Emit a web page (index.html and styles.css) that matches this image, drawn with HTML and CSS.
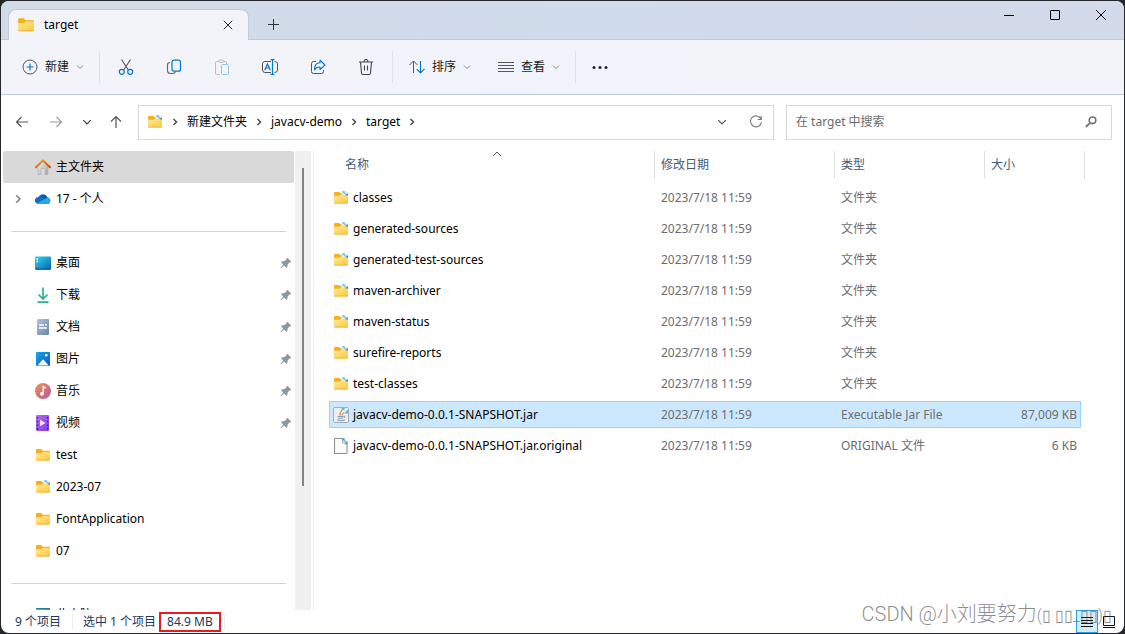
FILE: index.html
```html
<!DOCTYPE html>
<html lang="zh-CN">
<head>
<meta charset="utf-8">
<title>target</title>
<link rel="stylesheet" href="styles.css">
</head>
<body>
<svg class="defs" aria-hidden="true">
  <defs>
    <linearGradient id="gFolder" x1="0" y1="0" x2="1" y2="1"><stop offset="0" stop-color="#ffe79a"/><stop offset="1" stop-color="#fdc93c"/></linearGradient>
    <linearGradient id="gDesk" x1="0" y1="0" x2="1" y2="1"><stop offset="0" stop-color="#35d5e6"/><stop offset="1" stop-color="#0a62b8"/></linearGradient>
    <linearGradient id="gDoc" x1="0" y1="0" x2="1" y2="1"><stop offset="0" stop-color="#b3c3d9"/><stop offset="1" stop-color="#6786a8"/></linearGradient>
    <linearGradient id="gPic" x1="0" y1="0" x2="1" y2="1"><stop offset="0" stop-color="#19a5ec"/><stop offset="1" stop-color="#0a5cb8"/></linearGradient>
    <linearGradient id="gMus" x1="0" y1="0" x2="1" y2="1"><stop offset="0" stop-color="#f39354"/><stop offset="1" stop-color="#b0559f"/></linearGradient>
    <linearGradient id="gVid" x1="0" y1="0" x2="1" y2="1"><stop offset="0" stop-color="#b56cf5"/><stop offset="1" stop-color="#7f3be0"/></linearGradient>
    <linearGradient id="gRoof" x1="0" y1="0" x2="1" y2="1"><stop offset="0" stop-color="#f7a02b"/><stop offset="1" stop-color="#d1440c"/></linearGradient>
    <linearGradient id="gWall" x1="0" y1="0" x2="1" y2="1"><stop offset="0" stop-color="#f2f2f2"/><stop offset="1" stop-color="#a5a5a5"/></linearGradient>
  </defs>
  <symbol id="folder" viewBox="0 0 16 16"><path d="M1 3.200Q1 2 2 2h4.200l1.600 1.800H14q1 0 1 1V7H1z" fill="#f5b01a"/><path d="M1 6.200h5.600L8 4.800h6q1 0 1 1v6.800q0 1-1 1H2q-1 0-1-1z" fill="url(#gFolder)"/><path d="M1.300 13.100h13.400" stroke="#eab02f" stroke-width=".8"/></symbol>
  <symbol id="linked" viewBox="0 0 16 16"><path d="M1 3.200Q1 2 2 2h4.200l1.600 1.200H14q1 0 1 1V7H1z" fill="#f5b01a"/><path d="M8.500 1.200h5.500l1 1V6H8.500z" fill="#e3f1f8"/><path d="M9 1.200h3.200L9.800 3.600z" fill="#6fbfe6"/><path d="M11 2.500l3 2.800" stroke="#6fbfe6" stroke-width="1.200"/><path d="M15 3v3.200h-3.200z" fill="#3b86ad"/><path d="M1 5.800h5.600L8 4.800h3.500l1 .8H15v7q0 1-1 1H2q-1 0-1-1z" fill="url(#gFolder)"/><path d="M1.300 13.100h13.400" stroke="#eab02f" stroke-width=".8"/></symbol>
  <symbol id="home" viewBox="0 0 16 16"><path d="M3 7l5-4.500L13 7v8.500H10V10H6v5.500H3z" fill="url(#gWall)"/><path d="M3 7l5-4.500L13 7v8.500h-3V9.500H6v6H3z" fill="none" stroke="#a9a9a9" stroke-width=".5"/><path d="M1 8.200l7-6.800 7 6.800" fill="none" stroke="url(#gRoof)" stroke-width="2" stroke-linejoin="round" stroke-linecap="round"/></symbol>
  <symbol id="cloud" viewBox="0 0 16 16"><path d="M3.500 13A3.500 3.500 0 0 1 3.300 6 5 5 0 0 1 12.500 6.500 3.300 3.300 0 0 1 12.800 13z" fill="#0d6fcb"/><path d="M5.500 5A5 5 0 0 1 12.500 6.500L9 9z" fill="#1257a8"/><path d="M2 12.500L9 8.200l3-1.500a3.200 3.200 0 0 1 .8 6.300h-9z" fill="#28a8ea"/></symbol>
  <symbol id="desktop" viewBox="0 0 16 16"><rect y="1.500" width="16" height="13" rx="1" fill="url(#gDesk)"/><path d="M1.500 4h1.500M1.500 6.500h1.500" stroke="#eaffff" stroke-width="1.500"/><path d="M0 13.500h16v.5q0 .8-1 .8H1q-1 0-1-.8z" fill="#0b519c"/></symbol>
  <symbol id="download" viewBox="0 0 16 16"><path d="M8 .5v11M3.500 7.500L8 12l4.500-4.500M2.500 15.200h11" fill="none" stroke="#27b392" stroke-width="1.700"/></symbol>
  <symbol id="document" viewBox="0 0 16 16"><rect x="2" width="12" height="16" rx="1" fill="url(#gDoc)"/><path d="M4 6h5M4 9h8M10 5.800h2" stroke="#fff" stroke-width="1.500"/></symbol>
  <symbol id="picture" viewBox="0 0 16 16"><rect x="1" y="1" width="14" height="14" rx="1" fill="url(#gPic)"/><path d="M2.500 14.500l5-5.700q.6-.6 1.200 0l5 5.700z" fill="#f2faff"/><circle cx="11.300" cy="4.300" r="1.300" fill="#fff"/></symbol>
  <symbol id="music" viewBox="0 0 16 16"><circle cx="8" cy="8" r="8" fill="url(#gMus)"/><circle cx="6.900" cy="10.800" r="1.900" fill="#fff"/><path d="M8.200 10.800V3.500l2.600 1.600" fill="none" stroke="#fff" stroke-width="1.400"/></symbol>
  <symbol id="video" viewBox="0 0 16 16"><rect x="1" width="13" height="16" rx="1" fill="url(#gVid)"/><path d="M5 4.800v6.400L10.500 8z" fill="#f5e9ff"/><path d="M2.500 2v13M12.700 2v13" stroke="#4b1b96" stroke-width="1.500" stroke-dasharray="1.500 2.200"/></symbol>
  <symbol id="pc" viewBox="0 0 16 16"><rect x="1" y="1" width="14" height="10" fill="url(#gDesk)"/><path d="M1 1h14v1H1z" fill="#277d91"/><path d="M5 13h6v1H5z" fill="#888"/></symbol>
  <symbol id="pin" viewBox="0 0 12 12"><path d="M7.300.8l3.900 3.700-1 1-.7-.1-2 2.200v2.200L6.500 10.700 4.200 8.400.8 11.500l-.4-.4L3.300 7.500 1.100 5.200l1-.9h2.200l2.300-2-.2-.7z" fill="#8b989f"/></symbol>
  <symbol id="jar" viewBox="0 0 16 16"><rect x=".5" y=".5" width="15" height="15" rx="1" fill="#eceef0" stroke="#a3abb3"/><path d="M7.500 8.500C5 6.200 9.500 5.300 8.500 2.500M9.300 8.500c-1-1.500 1.500-2 1.500-3" fill="none" stroke="#e88a5b" stroke-width="1.200"/><path d="M4.500 9.500h6M5 11.300h5M4 13q4 1.300 8 0M10.500 9q2.500 0 .5 2" fill="none" stroke="#8199b0"/><path d="M9 1h3l-2.400 2.400zM15 3v3.200h-3.200zM11 2.500l3 3" fill="#4ba5d3" stroke="#6fbfe6" stroke-width=".6"/></symbol>
  <symbol id="file" viewBox="0 0 16 16"><path d="M1.500.5h8.500l4 4v11H1.500z" fill="#fbfbfb" stroke="#8c8c8c"/><path d="M9.500.5v4.500h4.500" fill="#e6eef3" stroke="#a9b4ba"/><path d="M9 .6h3.200L9.800 3zM14.500 3v3.200h-3.200z" fill="#3f93bd"/><path d="M10.500 1.800l3 3" stroke="#6fbfe6" stroke-width="1.200"/></symbol>
  <symbol id="down" viewBox="0 0 8 8"><path d="M1 2.500l3 3 3-3" fill="none" stroke="currentColor"/></symbol>
  <symbol id="right" viewBox="0 0 8 8"><path d="M2.500 1l3 3-3 3" fill="none" stroke="currentColor" stroke-width="1.400"/></symbol>
</svg>

<div class="window">
  <header class="titlebar">
    <div class="tab">
      <svg class="i18" viewBox="0 0 16 16"><use href="#folder"/></svg>
      <span class="tab-name">target</span>
      <button class="plain" aria-label="关闭标签页"><svg class="i10" viewBox="0 0 10 10"><path d="M.8.8l8.400 8.400M9.200.8L.8 9.200" fill="none" stroke="#222"/></svg></button>
    </div>
    <button class="plain newtab" aria-label="新标签页"><svg class="i12" viewBox="0 0 12 12"><path d="M5.500 0v11M0 5.500h11" stroke="#333"/></svg></button>
    <div class="controls">
      <button class="plain" aria-label="最小化"><svg class="i12" viewBox="0 0 12 12"><path d="M1 6.500h10" stroke="#000"/></svg></button>
      <button class="plain" aria-label="最大化"><svg class="i12" viewBox="0 0 12 12"><rect x="1.500" y="1.500" width="9" height="9" rx=".5" fill="none" stroke="#000"/></svg></button>
      <button class="plain" aria-label="关闭"><svg class="i12" viewBox="0 0 12 12"><path d="M1 1l10 10M11 1L1 11" stroke="#000"/></svg></button>
    </div>
  </header>

  <div class="toolbar">
    <button class="plain tool first"><svg class="i16" viewBox="0 0 16 16"><circle cx="8" cy="8" r="7" fill="none" stroke="#555"/><path d="M8 4.500v7M4.500 8h7" stroke="#0078d4" stroke-width="1.200"/></svg><span>新建</span><svg class="i8"><use href="#down"/></svg></button>
    <div class="group icons">
      <button class="plain ico" aria-label="剪切"><svg class="i16" viewBox="0 0 16 16"><path d="M3.500.5l6.800 10.500M12.500.5L5.700 11" stroke="#555" stroke-width="1.100"/><circle cx="3.800" cy="12.800" r="2.500" fill="none" stroke="#0078d4" stroke-width="1.200"/><circle cx="12.200" cy="12.800" r="2.500" fill="none" stroke="#0078d4" stroke-width="1.200"/></svg></button>
      <button class="plain ico" aria-label="复制"><svg class="i16" viewBox="0 0 16 16"><path d="M4 3.500Q1.500 3.500 1.500 6v5.500q0 3 3 3H7q2 0 2.500-2" fill="none" stroke="#666" stroke-width="1.100"/><rect x="6" y="1.200" width="8.500" height="11" rx="2" fill="none" stroke="#0078d4" stroke-width="1.200"/></svg></button>
      <button class="plain ico" aria-label="粘贴"><svg class="i16" viewBox="0 0 16 16"><path d="M6 15.500H2.500q-1 0-1-1v-11q0-1 1-1H4M10 2.500h1.500q1 0 1 1V5M5.500 1h3q1 0 1 1.200t-1 1.200h-3q-1 0-1-1.200t1-1.200z" fill="none" stroke="#b9bcc1"/><rect x="7.500" y="5.500" width="7" height="10" rx="1" fill="none" stroke="#91c5ec"/></svg></button>
      <button class="plain ico" aria-label="重命名"><svg class="i16" viewBox="0 0 16 16"><path d="M9 13.500H3q-2.500 0-2.500-2.500V5Q.5 2.500 3 2.500h6M12.500 2.500q3 0 3 2.500v6q0 2.500-3 2.500" fill="none" stroke="#555"/><path d="M2.700 11.200L5.500 5l2.800 6.200M3.700 9h3.600M8.500.6h4M8.500 15.400h4M10.500.6v14.800" fill="none" stroke="#0078d4" stroke-width="1.200"/></svg></button>
      <button class="plain ico" aria-label="共享"><svg class="i16" viewBox="0 0 16 16"><path d="M6 2.500H3.500q-2 0-2 2v8q0 2 2 2h8q2 0 2-2V11" fill="none" stroke="#555"/><path d="M10 1.200L15 6l-5 4.500V8Q6.500 7.500 4.500 11 4.500 4 10 3.800z" fill="#f7fbff" stroke="#0078d4" stroke-width="1.100" stroke-linejoin="round"/></svg></button>
      <button class="plain ico" aria-label="删除"><svg class="i16" viewBox="0 0 16 16"><path d="M1 3h14M2.500 3l1 11q.2 1.500 1.500 1.500h6q1.300 0 1.500-1.500l1-11M6 3q0-2.500 2-2.500T10 3M6.500 6.500v5M9.500 6.500v5" fill="none" stroke="#444" stroke-width="1.100"/></svg></button>
    </div>
    <div class="group menus">
      <button class="plain tool"><svg class="i16" viewBox="0 0 16 16"><path d="M4.500 14V2M.5 6l4-4 4 4" fill="none" stroke="#555"/><path d="M11.500 2v12M7.800 10.200l3.700 3.700 4-4" fill="none" stroke="#0078d4" stroke-width="1.100"/></svg><span>排序</span><svg class="i8"><use href="#down"/></svg></button>
      <button class="plain tool"><svg class="i16" viewBox="0 0 16 16"><path d="M0 3.500h16M0 6.500h16M0 9.500h16M0 12.500h16" stroke="#555"/></svg><span>查看</span><svg class="i8"><use href="#down"/></svg></button>
    </div>
    <div class="group more"><button class="plain" aria-label="更多"><svg class="i16" viewBox="0 0 16 16"><g fill="#222"><circle cx="2" cy="8.500" r="1.500"/><circle cx="8" cy="8.500" r="1.500"/><circle cx="14" cy="8.500" r="1.500"/></g></svg></button></div>
  </div>

  <div class="navrow">
    <button class="plain nav" aria-label="后退"><svg class="i14" viewBox="0 0 14 14"><path d="M13 7H1.500M6.500 2L1.500 7l5 5" fill="none" stroke="#555" stroke-width="1.200"/></svg></button>
    <button class="plain nav" aria-label="前进"><svg class="i14" viewBox="0 0 14 14"><path d="M1 7h11.500M7.500 2l5 5-5 5" fill="none" stroke="#999" stroke-width="1.100"/></svg></button>
    <button class="plain nav recent" aria-label="最近位置"><svg class="i10"><use href="#down"/></svg></button>
    <button class="plain nav up" aria-label="向上"><svg class="i14" viewBox="0 0 14 14"><path d="M7 13V1.500M2 6.500l5-5 5 5" fill="none" stroke="#555" stroke-width="1.200"/></svg></button>
    <nav class="address" aria-label="地址">
      <svg class="i16"><use href="#linked"/></svg>
      <svg class="i8"><use href="#right"/></svg><a href="#">新建文件夹</a>
      <svg class="i8"><use href="#right"/></svg><a href="#">javacv-demo</a>
      <svg class="i8"><use href="#right"/></svg><a href="#">target</a>
      <svg class="i8"><use href="#right"/></svg>
      <span class="address-tools">
        <button class="plain" aria-label="展开"><svg class="i10"><use href="#down"/></svg></button>
        <button class="plain" aria-label="刷新"><svg class="i14" viewBox="0 0 14 14"><path d="M12 4A5.500 5.500 0 1 0 12.500 7M12.200 1v3.500H8.800" fill="none" stroke="#777" stroke-width="1.100"/></svg></button>
      </span>
    </nav>
    <form class="search">
      <input type="search" aria-label="搜索" placeholder="在 target 中搜索">
      <button class="plain" type="button" aria-label="搜索"><svg class="i12" viewBox="0 0 12 12"><circle cx="7.500" cy="4.300" r="3.300" fill="none" stroke="#707070" stroke-width="1.600"/><path d="M5 6.800L.8 11" stroke="#707070" stroke-width="1.800"/></svg></button>
    </form>
  </div>

  <div class="main">
    <aside class="sidebar">
      <ul class="tree">
        <li class="current"><svg class="i16"><use href="#home"/></svg><span>主文件夹</span></li>
        <li><svg class="i10 expand"><use href="#right"/></svg><svg class="i16"><use href="#cloud"/></svg><span>17 - 个人</span></li>
        <li class="line" role="separator"></li>
        <li><svg class="i16"><use href="#desktop"/></svg><span>桌面</span><svg class="i12 pin"><use href="#pin"/></svg></li>
        <li><svg class="i16"><use href="#download"/></svg><span>下载</span><svg class="i12 pin"><use href="#pin"/></svg></li>
        <li><svg class="i16"><use href="#document"/></svg><span>文档</span><svg class="i12 pin"><use href="#pin"/></svg></li>
        <li><svg class="i16"><use href="#picture"/></svg><span>图片</span><svg class="i12 pin"><use href="#pin"/></svg></li>
        <li><svg class="i16"><use href="#music"/></svg><span>音乐</span><svg class="i12 pin"><use href="#pin"/></svg></li>
        <li><svg class="i16"><use href="#video"/></svg><span>视频</span><svg class="i12 pin"><use href="#pin"/></svg></li>
        <li><svg class="i16"><use href="#folder"/></svg><span>test</span></li>
        <li><svg class="i16"><use href="#linked"/></svg><span>2023-07</span></li>
        <li><svg class="i16"><use href="#folder"/></svg><span>FontApplication</span></li>
        <li><svg class="i16"><use href="#folder"/></svg><span>07</span></li>
        <li class="line" role="separator"></li>
        <li><svg class="i16"><use href="#pc"/></svg><span>此电脑</span></li>
      </ul>
      <div class="scroll"><div class="thumb"></div></div>
    </aside>
    <section class="content">
      <svg class="sort" viewBox="0 0 10 6"><path d="M1 5l4-4 4 4" fill="none" stroke="#555"/></svg>
      <table class="files">
        <thead><tr><th>名称</th><th>修改日期</th><th>类型</th><th>大小</th></tr></thead>
        <tbody>
          <tr><td><svg class="i16"><use href="#linked"/></svg>classes</td><td>2023/7/18 11:59</td><td>文件夹</td><td></td></tr>
          <tr><td><svg class="i16"><use href="#linked"/></svg>generated-sources</td><td>2023/7/18 11:59</td><td>文件夹</td><td></td></tr>
          <tr><td><svg class="i16"><use href="#linked"/></svg>generated-test-sources</td><td>2023/7/18 11:59</td><td>文件夹</td><td></td></tr>
          <tr><td><svg class="i16"><use href="#linked"/></svg>maven-archiver</td><td>2023/7/18 11:59</td><td>文件夹</td><td></td></tr>
          <tr><td><svg class="i16"><use href="#linked"/></svg>maven-status</td><td>2023/7/18 11:59</td><td>文件夹</td><td></td></tr>
          <tr><td><svg class="i16"><use href="#linked"/></svg>surefire-reports</td><td>2023/7/18 11:59</td><td>文件夹</td><td></td></tr>
          <tr><td><svg class="i16"><use href="#linked"/></svg>test-classes</td><td>2023/7/18 11:59</td><td>文件夹</td><td></td></tr>
          <tr class="selected"><td><svg class="i16"><use href="#jar"/></svg>javacv-demo-0.0.1-SNAPSHOT.jar</td><td>2023/7/18 11:59</td><td>Executable Jar File</td><td>87,009 KB</td></tr>
          <tr><td><svg class="i16"><use href="#file"/></svg>javacv-demo-0.0.1-SNAPSHOT.jar.original</td><td>2023/7/18 11:59</td><td>ORIGINAL 文件</td><td>6 KB</td></tr>
        </tbody>
      </table>
    </section>
  </div>

  <footer class="status">
    <span class="count">9 个项目</span>
    <span class="picked">选中 1 个项目</span>
    <span class="size">84.9 MB</span>
    <span class="end"></span>
    <div class="views">
      <button class="plain on" aria-label="详细信息"><svg class="i14" viewBox="0 0 14 14"><path d="M1 2.500h12M1 5.500h12M1 8.500h12M1 11.500h12" stroke="#111"/></svg></button>
      <button class="plain" aria-label="大图标"><svg class="i14" viewBox="0 0 14 14"><path d="M1.500 1.500h11v9h-11zM1 12.500h12" fill="none" stroke="#111"/></svg></button>
    </div>
    <div class="watermark">CSDN @小刘要努力<span class="face">(▯ ▯▯_▯▯)▯</span></div>
  </footer>
</div>
</body>
</html>
```
FILE: styles.css
```css
* { box-sizing: border-box; }
body {
  margin: 0;
  padding: 1px;
  height: 100vh;
  background: #26272b;
  font: 12px/16px "Noto Sans", "Noto Sans CJK SC", sans-serif;
  color: #000;
}
svg { display: block; flex: none; }
.defs { position: absolute; width: 0; height: 0; }
.i8 { width: 8px; height: 8px; }
.i10 { width: 10px; height: 10px; }
.i12 { width: 12px; height: 12px; }
.i14 { width: 14px; height: 14px; }
.i16 { width: 16px; height: 16px; }
.i18 { width: 18px; height: 18px; }
.plain {
  display: flex;
  align-items: center;
  justify-content: center;
  padding: 0;
  border: 0;
  background: none;
  font: inherit;
  color: #1a1a1a;
}
.window {
  display: flex;
  flex-direction: column;
  height: 100%;
  overflow: hidden;
  border-radius: 8px;
  background: #fff;
}

.titlebar {
  display: flex;
  flex: none;
  align-items: flex-end;
  height: 39px;
  padding-left: 7px;
  background: linear-gradient(90deg, #d3dae7, #d0dbeb 50%, #d3daea);
  box-shadow: inset 0 -1px #bec9dc;
}
.tab {
  display: flex;
  align-items: center;
  width: 241px;
  height: 31px;
  padding: 0 15px 0 8px;
  border: 1px solid #c1cbdc;
  border-bottom: 0;
  border-radius: 8px 8px 0 0;
  background: #f2f4f9;
}
.tab-name { flex: 1; margin-left: 9px; }
.newtab { width: 32px; height: 31px; margin-left: 9px; }
.controls { display: flex; align-self: flex-start; margin-left: auto; }
.controls .plain { width: 46px; height: 28px; }

.toolbar {
  display: flex;
  flex: none;
  align-items: center;
  height: 55px;
  border-bottom: 1px solid #bfcbdb;
  background: linear-gradient(90deg, #f3f4f9, #f0f3f9 45%, #f3f4f9);
}
.tool { gap: 7px; }
.tool .i8 { color: #888; }
.first { padding: 0 15px 0 21px; }
.group {
  display: flex;
  align-items: center;
  height: 32px;
  border-left: 1px solid #dfe2e8;
}
.ico { width: 48px; }
.icons { padding: 0 2px; }
.menus { gap: 27px; padding: 0 15px 0 16px; }
.more { padding: 0 16px; }

.navrow {
  display: flex;
  flex: none;
  align-items: center;
  height: 56px;
  padding: 0 12px 2px 4px;
}
.nav { width: 34px; height: 34px; }
.recent { width: 28px; color: #444; }
.up { width: 30px; margin-right: 7px; }
.address, .search {
  display: flex;
  align-items: center;
  height: 35px;
  border: 1px solid #d9d9d9;
}
.address { flex: 1; gap: 8px; padding: 0 10px 0 8px; }
.address .i8 { color: #444; }
.address a { color: #000; text-decoration: none; }
.address-tools { display: flex; gap: 22px; margin-left: auto; }
.address-tools .plain { color: #555; }
.search { width: 326px; margin-left: 12px; padding: 0 14px 0 9px; }
.search input {
  flex: 1;
  min-width: 0;
  padding: 0;
  border: 0;
  outline: 0;
  background: none;
  font: inherit;
}
.search input::placeholder { color: #6b6b6b; opacity: 1; }

.main { display: flex; flex: 1; min-height: 0; }
.sidebar {
  display: flex;
  flex: none;
  width: 313px;
  padding: 0 2px;
  border-right: 1px solid #eee;
}
.tree {
  flex: 1;
  margin: 0;
  padding: 0;
  overflow: hidden;
  list-style: none;
}
.tree li {
  position: relative;
  display: flex;
  gap: 5px;
  align-items: center;
  height: 32px;
  margin-right: 1px;
  padding: 0 2px 0 32px;
}
.tree .current { border-radius: 2px; background: #d9d9d9; }
.tree .line { padding: 0 8px; }
.line::before { content: ""; flex: 1; height: 1px; background: #d3d3d3; }
.expand { position: absolute; left: 10px; color: #888; }
.pin { margin-left: auto; }
.scroll { width: 16px; padding: 17px 7px 0; background: #f0f0f0; }
.thumb { width: 2px; height: 72%; background: #858585; }

.content { position: relative; flex: 1; min-width: 0; padding: 0 39px 0 15px; }
.sort { position: absolute; top: 0; left: 178px; width: 10px; height: 6px; }
.files, .files thead, .files tbody { display: block; }
.files tr { display: grid; grid-template-columns: 326fr 180fr 150fr 100fr; }
.files th {
  display: flex;
  align-items: center;
  height: 28px;
  padding: 0 6px;
  border-right: 1px solid #e0e0e0;
  font-weight: 400;
  color: #43597a;
}
.files th:first-child { padding-left: 16px; }
.files tbody { padding-top: 1px; }
.files tbody tr {
  grid-template-columns: 326fr 180fr 150fr 96fr;
  height: 27px;
  margin: 4px 4px 0 0;
  border-radius: 1px;
}
.files td {
  display: flex;
  gap: 4px;
  align-items: center;
  padding: 0 6px;
  white-space: nowrap;
  color: #6d6d6d;
}
.files td:first-child { padding-left: 4px; color: #000; }
.files td:last-child { justify-content: flex-end; padding-right: 4px; }
.files .selected { background: #cce8ff; box-shadow: inset 0 0 0 1px #99d1ff; }

.status {
  position: relative;
  display: flex;
  flex: none;
  align-items: center;
  height: 23px;
  padding: 0 4px 0 14px;
  color: #1e395b;
}
.count { padding-right: 11px; border-right: 1px solid #eee; }
.picked { padding: 0 3px 0 10px; }
.size { padding: 0 6px; border: 2px solid #e81b23; }
.end { width: 4px; height: 16px; border-right: 1px solid #eee; }
.views { display: flex; margin-left: auto; }
.views .plain { width: 22px; height: 23px; }
.views .on { border: 1px solid #26a0da; background: #d5ebf8; }
.watermark {
  position: absolute;
  right: 12px;
  bottom: 4px;
  font: 300 20px/26px Roboto, "Noto Sans CJK SC", sans-serif;
  white-space: nowrap;
  color: rgba(90, 90, 90, .7);
}
.face { font-size: 16px; }
```
